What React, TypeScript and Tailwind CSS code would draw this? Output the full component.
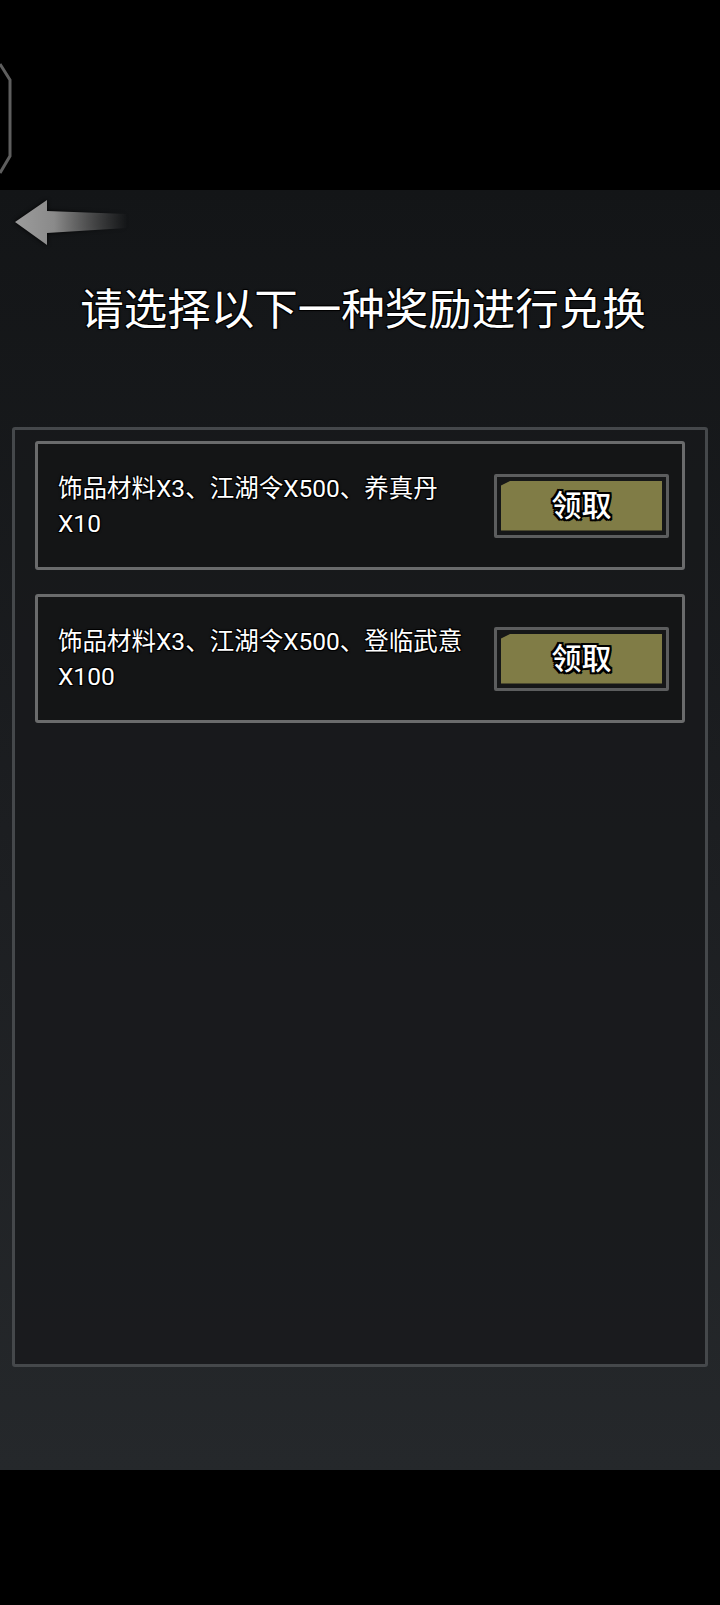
import React from "react";

// One row per reward option
interface RewardOption {
  id: number;
  lines: string[];
}

const rewards: RewardOption[] = [
  { id: 1, lines: ["饰品材料X3、江湖令X500、养真丹", "X10"] },
  { id: 2, lines: ["饰品材料X3、江湖令X500、登临武意", "X100"] },
];

const outline =
  "[text-shadow:-1px_-1px_0_#000,1px_-1px_0_#000,-1px_1px_0_#000,1px_1px_0_#000,0_0_3px_#000]";

const BackArrow = () => (
  <svg width="116" height="50" viewBox="0 0 116 50" className="drop-shadow-[0_0_2px_#000]">
    <defs>
      <linearGradient id="arrowFill" x1="0" y1="0" x2="1" y2="0">
        <stop offset="0" stopColor="#9c9c9c" />
        <stop offset="0.35" stopColor="#8a8a8a" />
        <stop offset="1" stopColor="#8a8a8a" stopOpacity="0" />
      </linearGradient>
    </defs>
    <path d="M2 24 L34 2 L34 13 L114 16 L114 30 L34 35 L34 47 Z" fill="url(#arrowFill)" />
  </svg>
);

const ClaimButton = () => (
  <button
    type="button"
    className="w-[175px] h-[64px] shrink-0 border-[3px] border-[#5c5d5e] bg-[#161718] rounded-[2px] p-[4px]"
  >
    <div className="w-full h-full flex items-center justify-center bg-[#807c46] [clip-path:polygon(10px_0,100%_0,100%_100%,0_100%,0_5px)] text-white text-[30px] leading-none font-medium [text-shadow:-2px_-2px_0_#000,2px_-2px_0_#000,-2px_2px_0_#000,2px_2px_0_#000,0_2px_0_#000,0_-2px_0_#000,2px_0_0_#000,-2px_0_0_#000]">
      领取
    </div>
  </button>
);

const App: React.FC = () => {
  return (
    <div className="w-[720px] h-[1605px] bg-black flex flex-col font-['Roboto','Noto_Sans_CJK_SC',sans-serif]">
      {/* top bar */}
      <div className="relative h-[190px] shrink-0 bg-black">
        <svg width="14" height="114" viewBox="0 0 14 114" className="absolute left-0 top-[62px]">
          <path d="M0 2 L10 18 L10 94 L0 111" fill="none" stroke="#5e5e5e" strokeWidth="3" />
        </svg>
      </div>

      {/* game area */}
      <div className="h-[1280px] shrink-0 flex flex-col bg-gradient-to-b from-[#131517] via-[#1c1e21] to-[#25282b]">
        <div className="mt-[8px] ml-[13px] h-[50px]">
          <BackArrow />
        </div>

        <h1
          className={`mt-[38px] h-[50px] leading-[50px] text-center text-white text-[43.5px] font-normal pl-[6px] ${outline}`}
        >
          请选择以下一种奖励进行兑换
        </h1>

        <div className="mt-[91px] mx-[12px] h-[940px] border-[3px] border-[#45484b] rounded-[3px] bg-[#18191b]/80 px-[20px] pt-[11px] flex flex-col gap-[24px]">
          {rewards.map((r) => (
            <div
              key={r.id}
              className="h-[129px] border-[3px] border-[#6a6b6c] rounded-[3px] bg-[#141516] flex items-center justify-between pl-[20px] pr-[13px]"
            >
              <div className={`text-white text-[24.5px] leading-[35px] ${outline}`}>
                {r.lines.map((l) => (
                  <div key={l}>{l}</div>
                ))}
              </div>
              <ClaimButton />
            </div>
          ))}
        </div>
      </div>

      <div className="flex-1 bg-black" />
    </div>
  );
};

export default App;
